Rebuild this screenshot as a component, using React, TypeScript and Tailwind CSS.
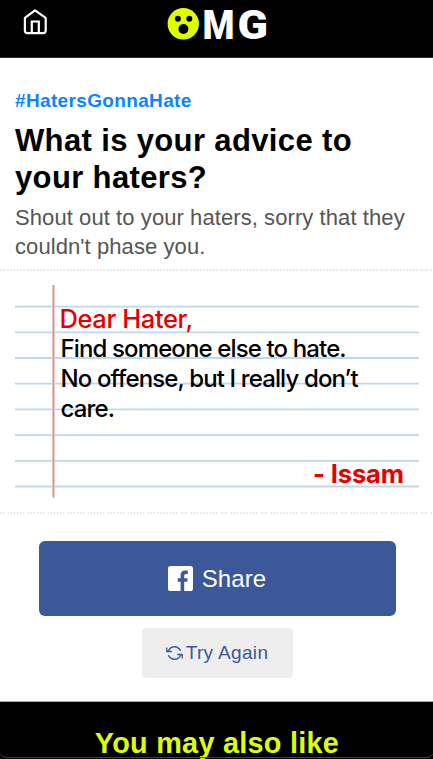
import React from 'react';

const messageLines = ['Find someone else to hate.', 'No offense, but I really don’t', 'care.'];
const ruleOffsets = [0, 1, 2, 3, 4, 5, 6, 7];

function HomeIcon() {
  return (
    <svg className="w-6 h-[26px]" viewBox="0 0 24 26" fill="none" stroke="white" strokeWidth="2.2" strokeLinejoin="round">
      <path d="M12 1.4 L1.9 8.8 V21.6 Q1.9 24.2 4.5 24.2 H20.1 Q22.7 24.2 22.7 21.6 V8.8 Z" />
      <path d="M8.8 24 V12.5 H15.8 V24" strokeLinejoin="miter" />
    </svg>
  );
}

function Logo() {
  return (
    <svg className="w-[106px] h-[50px]" viewBox="0 0 106 50" role="img" aria-label="OMG">
      <circle cx="20.3" cy="23.8" r="15.7" fill="#dfff00" />
      <circle cx="14.9" cy="18.8" r="3" fill="black" />
      <circle cx="26.3" cy="18.8" r="3" fill="black" />
      <circle cx="20.4" cy="29" r="5" fill="black" />
      <g fill="white" fontFamily="Roboto, sans-serif" fontWeight="900" fontSize="41">
        <text x="39.5" y="38.5" textLength="32" lengthAdjust="spacingAndGlyphs">M</text>
        <text x="74.5" y="38.5" textLength="30.5" lengthAdjust="spacingAndGlyphs">G</text>
      </g>
    </svg>
  );
}

function FacebookIcon() {
  return (
    <svg className="w-[25px] h-[25px]" viewBox="0 0 25 25">
      <rect width="25" height="25" rx="2.6" fill="white" />
      <path d="M12.6 25 V15.8 H9.7 V12.2 H12.6 V9.3 Q12.6 4.6 17 4.6 H19.8 V8 H17.8 Q16.2 8 16.2 9.6 V12.2 H19.7 L19.2 15.8 H16.2 V25 Z" fill="#3b5998" />
    </svg>
  );
}

function RefreshIcon() {
  return (
    <svg className="w-[17px] h-[14px]" viewBox="0 0 17 14" fill="none" stroke="#3b5998" strokeWidth="1.3">
      <path d="M1 5.3 L2.6 4.6 C5 -0.6 12 -0.6 14.6 4.9" />
      <path d="M.8 1.4 V5.5 H5.8" />
      <path d="M16 8.7 L14.4 9.4 C12 14.6 5 14.6 2.4 9.1" />
      <path d="M16.2 12.6 V8.5 H11.2" />
    </svg>
  );
}

function Divider() {
  return <div className="h-[2px] shrink-0 bg-[repeating-linear-gradient(90deg,#ebebeb_0_2px,#ffffff_2px_3.33px)]" />;
}

export default function App() {
  return (
    <div className="relative flex h-[759px] w-[433px] flex-col overflow-hidden bg-white font-['Liberation_Sans',Arial,sans-serif]">
      <header className="grid h-[58px] shrink-0 grid-cols-3 border-b border-[#302b2d] bg-black">
        <div className="pt-[9px] pl-[23px]">
          <HomeIcon />
        </div>
        <div className="flex justify-center">
          <Logo />
        </div>
      </header>

      <section className="h-[211px] shrink-0 px-[15px] pt-[31px]">
        <p className="whitespace-nowrap text-[19px] leading-[24px] font-bold tracking-[0.35px] text-[#0a84ff]">#HatersGonnaHate</p>
        <h1 className="mt-[9px] whitespace-nowrap text-[31px] leading-[37px] font-bold tracking-[0.36px] text-black">
          What is your advice to<br />your haters?
        </h1>
        <p className="mt-[7px] whitespace-nowrap text-[22px] leading-[29px] tracking-[0.08px] text-[#555]">
          Shout out to your haters, sorry that they<br />couldn't phase you.
        </p>
      </section>
      <Divider />

      <section className="h-[241px] shrink-0 pt-[14px] pr-[14px] pl-[15px]">
        <div className="relative h-[213px] pl-[45px] font-['Inter',sans-serif]">
          <svg className="absolute inset-0 h-[213px] w-[404px]" viewBox="0 0 404 213">
            {ruleOffsets.map((n) => (
              <line key={n} x1="0" x2="404" y1={21.6 + n * 25.7} y2={21.6 + n * 25.7} stroke="#bdd7f3" strokeWidth="1.8" />
            ))}
            <rect x="37" width="3" height="212.5" fill="#ecc8c5" />
            <rect x="38" width="1" height="212.5" fill="#c99592" />
          </svg>
          <div className="relative flex h-full flex-col">
            <p className="mt-[17px] ml-[-0.5px] whitespace-nowrap text-[25.5px] leading-[34px] font-medium tracking-[-0.4px] text-[#e60000]">Dear Hater,</p>
            <div className="mt-[-2px] ml-[0.5px] whitespace-nowrap text-[24px] leading-[30px] font-medium tracking-[-0.87px] text-black">
              {messageLines.map((line) => (
                <p key={line}>{line}</p>
              ))}
            </div>
            <p className="mt-[35px] mr-[15px] text-right text-[25.5px] leading-[30px] font-bold tracking-[-0.1px] text-[#e60000]">- Issam</p>
          </div>
        </div>
      </section>
      <Divider />

      <section className="flex h-[187px] shrink-0 flex-col items-center pt-[27px] pl-[2px]">
        <button className="flex h-[75px] w-[357px] items-center justify-center gap-[9px] rounded-md bg-[#3b5998] pr-[1px] text-[24px] tracking-[0.1px] text-white">
          <FacebookIcon />
          Share
        </button>
        <button className="mt-3 flex h-[50px] w-[151px] items-center justify-center gap-[3px] rounded bg-[#eee] pr-[1px] text-[19px] tracking-[0.35px] text-[#3b5998]">
          <RefreshIcon />
          Try Again
        </button>
      </section>

      <footer className="flex-1 border-t border-[#aaa] bg-black pt-[24px] pl-[1px] text-center">
        <h2 className="whitespace-nowrap text-[28.8px] leading-[34px] font-bold tracking-[0.28px] text-[#dfff00]">You may also like</h2>
      </footer>
      <div className="absolute bottom-[1px] left-[-1px] h-[30px] w-[435px] rounded-b-lg border-b border-[#454042]" />
    </div>
  );
}
